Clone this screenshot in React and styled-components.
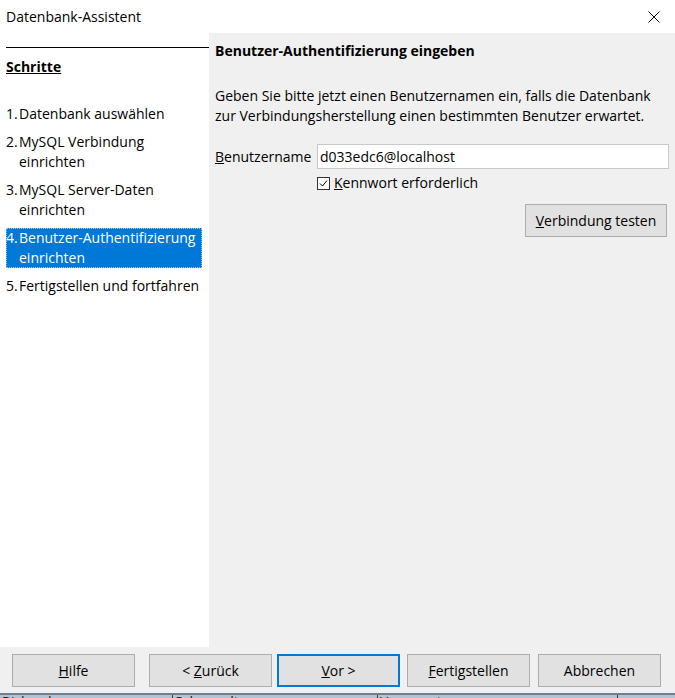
import React from 'react';
import styled, { createGlobalStyle } from 'styled-components';

const GlobalStyle = createGlobalStyle`
  html, body {
    margin: 0;
    padding: 0;
    background: #ffffff;
  }
  body {
    font-family: "Open Sans", "Noto Sans", sans-serif;
    font-size: 14px;
    color: #000;
  }
`;

const steps = [
  { num: '1.', label: 'Datenbank auswählen' },
  { num: '2.', label: 'MySQL Verbindung einrichten' },
  { num: '3.', label: 'MySQL Server-Daten einrichten' },
  { num: '4.', label: 'Benutzer-Authentifizierung einrichten', active: true },
  { num: '5.', label: 'Fertigstellen und fortfahren' },
];

// offset = space before each button in the footer row
const footerButtons = [
  { key: 'H', rest: 'ilfe', offset: 0 },
  { pre: '<\u00a0', key: 'Z', rest: 'urück', offset: 14 },
  { key: 'V', rest: 'or >', primary: true, offset: 5 },
  { key: 'F', rest: 'ertigstellen', offset: 7 },
  { rest: 'Abbrechen', offset: 8 },
];

function App() {
  return (
    <>
      <GlobalStyle />
      <Window>
        <TitleBar>
          <Title>Datenbank-Assistent</Title>
          <CloseIcon viewBox="0 0 12 12">
            <path d="M0.5 0.5 L11.5 11.5 M11.5 0.5 L0.5 11.5" stroke="#000" strokeWidth="1" />
          </CloseIcon>
        </TitleBar>

        <Body>
          <StepsPanel>
            <StepsHeader>Schritte</StepsHeader>
            <StepList>
              {steps.map((s) => (
                <Step key={s.num} $active={s.active}>
                  <StepNum>{s.num}</StepNum>
                  <span>{s.label}</span>
                </Step>
              ))}
            </StepList>
          </StepsPanel>

          <Page>
            <PageTitle>Benutzer-Authentifizierung eingeben</PageTitle>
            <Intro>
              Geben Sie bitte jetzt einen Benutzernamen ein, falls die Datenbank
              zur Verbindungsherstellung einen bestimmten Benutzer erwartet.
            </Intro>
            <FieldRow>
              <Label><u>B</u>enutzername</Label>
              <TextInput defaultValue="d033edc6@localhost" />
            </FieldRow>
            <CheckRow>
              <CheckBox viewBox="0 0 13 13">
                <rect x="0.5" y="0.5" width="12" height="12" fill="#fff" stroke="#333" />
                <path d="M3 6.5 L5.5 9 L10 3.5" fill="none" stroke="#000" strokeWidth="1" />
              </CheckBox>
              <span><u>K</u>ennwort erforderlich</span>
            </CheckRow>
            <TestRow>
              <Button $width={142}><span><u>V</u>erbindung testen</span></Button>
            </TestRow>
          </Page>
        </Body>

        <Footer>
          {footerButtons.map((b, i) => (
            <Button key={i} $width={123} $primary={b.primary} $offset={b.offset}>
              <span>
                {b.pre}
                {b.key && <u>{b.key}</u>}
                {b.rest}
              </span>
            </Button>
          ))}
        </Footer>

        <Backdrop>
          <Cell $width={168}>Richard</Cell>
          <Cell $width={200}>Schwendtner</Cell>
          <Cell $width={235}>Vongonstr.</Cell>
          <Cell $width={72}></Cell>
        </Backdrop>
      </Window>
    </>
  );
}

const Window = styled.div`
  width: 675px;
  height: 698px;
  display: flex;
  flex-direction: column;
  background: #f0f0f0;
  overflow: hidden;
`;

const TitleBar = styled.div`
  height: 33px;
  flex: none;
  background: #ffffff;
  display: flex;
  align-items: center;
  justify-content: space-between;
  padding: 0 15px 0 6px;
`;

const Title = styled.div`
  font-size: 14px;
`;

const CloseIcon = styled.svg`
  width: 12px;
  height: 12px;
`;

const Body = styled.div`
  display: flex;
  height: 614px;
  flex: none;
`;

const StepsPanel = styled.div`
  width: 209px;
  flex: none;
  background: #ffffff;
  padding: 14px 0 0 6px;
  box-sizing: border-box;
`;

const StepsHeader = styled.div`
  border-top: 1px solid #000;
  padding-top: 9px;
  font-weight: 700;
  text-decoration: underline;
  line-height: 20px;
`;

const StepList = styled.div`
  display: flex;
  flex-direction: column;
  gap: 8px;
  margin-top: 27px;
  width: 196px;
`;

const Step = styled.div`
  display: flex;
  line-height: 20px;
  background: ${(p) => (p.$active ? '#0078d7' : 'transparent')};
  color: ${(p) => (p.$active ? '#ffffff' : '#000000')};
  outline: ${(p) => (p.$active ? '1px dotted #9fc8ef' : 'none')};
  outline-offset: -1px;
`;

const StepNum = styled.span`
  flex: none;
  width: 13px;
`;

const Page = styled.div`
  flex: 1;
  padding: 8px 6px 0 6px;
  display: flex;
  flex-direction: column;
`;

const PageTitle = styled.div`
  font-weight: 700;
  line-height: 20px;
`;

const Intro = styled.p`
  margin: 25px 0 0;
  line-height: 20px;
`;

const FieldRow = styled.div`
  display: flex;
  align-items: center;
  margin-top: 18px;
`;

const Label = styled.span`
  width: 102px;
  flex: none;
`;

const TextInput = styled.input`
  flex: 1;
  height: 25px;
  box-sizing: border-box;
  border: 1px solid #c8c8c8;
  background: #ffffff;
  font: inherit;
  padding: 0 2px;
  outline: none;
`;

const CheckRow = styled.div`
  display: flex;
  align-items: center;
  gap: 4px;
  margin: 4px 0 0 102px;
  line-height: 20px;
`;

const CheckBox = styled.svg`
  width: 13px;
  height: 13px;
`;

const TestRow = styled.div`
  display: flex;
  justify-content: flex-end;
  margin-top: 11px;
  padding-right: 2px;
`;

const Button = styled.div`
  width: ${(p) => p.$width}px;
  height: 33px;
  flex: none;
  margin-left: ${(p) => p.$offset || 0}px;
  box-sizing: border-box;
  display: flex;
  align-items: center;
  justify-content: center;
  background: #e1e1e1;
  border: ${(p) => (p.$primary ? '2px solid #0078d7' : '1px solid #adadad')};
  font-size: 14px;
`;

const Footer = styled.div`
  height: 46px;
  flex: none;
  display: flex;
  align-items: center;
  padding: 0 0 0 12px;
  box-sizing: border-box;
`;

const Backdrop = styled.div`
  flex: 1;
  display: flex;
  background: #b4c3d3;
  border-top: 2px solid #6f7f8f;
  overflow: hidden;
`;

const Cell = styled.div`
  width: ${(p) => p.$width}px;
  flex: none;
  border-right: 1px solid #3a3a3a;
  padding: 0 2px;
  line-height: 20px;
  margin-top: -3px;
  color: #1a1a1a;
`;

export default App;
